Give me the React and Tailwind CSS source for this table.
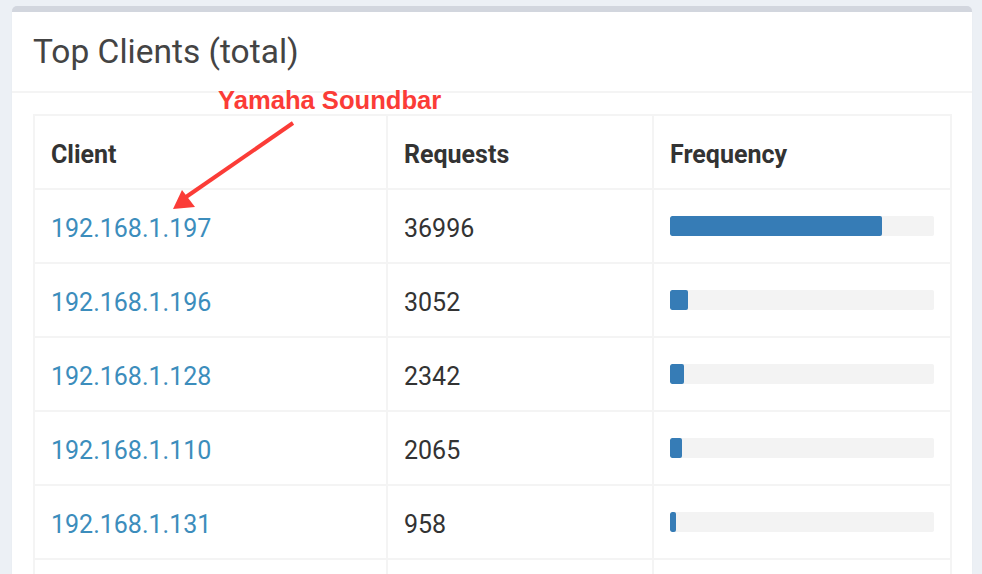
const clients = [
  { ip: "192.168.1.197", count: 36996, pct: 80.3 },
  { ip: "192.168.1.196", count: 3052, pct: 6.8 },
  { ip: "192.168.1.128", count: 2342, pct: 5.3 },
  { ip: "192.168.1.110", count: 2065, pct: 4.5 },
  { ip: "192.168.1.131", count: 958, pct: 2.3 },
]

function Annotation() {
  return (
    <div className="pointer-events-none absolute inset-0">
      <div className="absolute left-[218px] top-[85px] font-['Liberation_Sans',Arial,sans-serif] text-[25.6px] font-bold leading-[30px] text-[#fb3c37]">
        Yamaha Soundbar
      </div>
      <svg className="absolute left-0 top-0" width="982" height="574">
        <line x1="293" y1="123" x2="186" y2="197" stroke="#fb3c37" strokeWidth="4" />
        <polygon points="173,209 182,190 195,207" fill="#fb3c37" />
      </svg>
    </div>
  )
}

export default function App() {
  return (
    <div className="relative h-[574px] overflow-hidden bg-[#ecf0f5] pl-[12px] pr-[10px] pt-[6px] font-['Roboto',sans-serif]">
      <div className="h-[600px] rounded-[5px] border-t-[6px] border-[#d2d6de] bg-white shadow-[0_1px_1px_rgba(0,0,0,0.1)]">
        <div className="flex h-[81px] items-center border-b-2 border-[#f4f4f4] px-[21px]">
          <h3 className="text-[33.5px] leading-none text-[#444]">Top Clients (total)</h3>
        </div>
        <div className="px-[21px] pt-[21px]">
          <table className="w-[919px] border-collapse text-[25px] text-[#333]">
            <thead>
              <tr className="h-[74px]">
                <th className="w-[353px] border-2 border-[#f4f4f4] px-[16px] pt-[6px] text-left font-bold">Client</th>
                <th className="w-[266px] border-2 border-[#f4f4f4] px-[16px] pt-[6px] text-left font-bold">Requests</th>
                <th className="border-2 border-[#f4f4f4] px-[16px] pt-[6px] text-left font-bold">Frequency</th>
              </tr>
            </thead>
            <tbody>
              {clients.map((c) => (
                <tr key={c.ip} className="h-[74px]">
                  <td className="border-2 border-[#f4f4f4] px-[16px] pt-[6px]">
                    <a href="#" className="text-[#3c8dbc]">{c.ip}</a>
                  </td>
                  <td className="border-2 border-[#f4f4f4] px-[16px] pt-[6px]">{c.count}</td>
                  <td className="border-2 border-[#f4f4f4] px-[16px]">
                    <div className="h-[20px] w-full overflow-hidden rounded-[2px] bg-[#f3f3f3]">
                      <div className="h-full rounded-[2px] bg-[#367cb6]" style={{ width: `${c.pct}%` }} />
                    </div>
                  </td>
                </tr>
              ))}
              <tr className="h-[74px]">
                <td className="border-2 border-[#f4f4f4]" />
                <td className="border-2 border-[#f4f4f4]" />
                <td className="border-2 border-[#f4f4f4]" />
              </tr>
            </tbody>
          </table>
        </div>
      </div>
      <Annotation />
    </div>
  )
}
